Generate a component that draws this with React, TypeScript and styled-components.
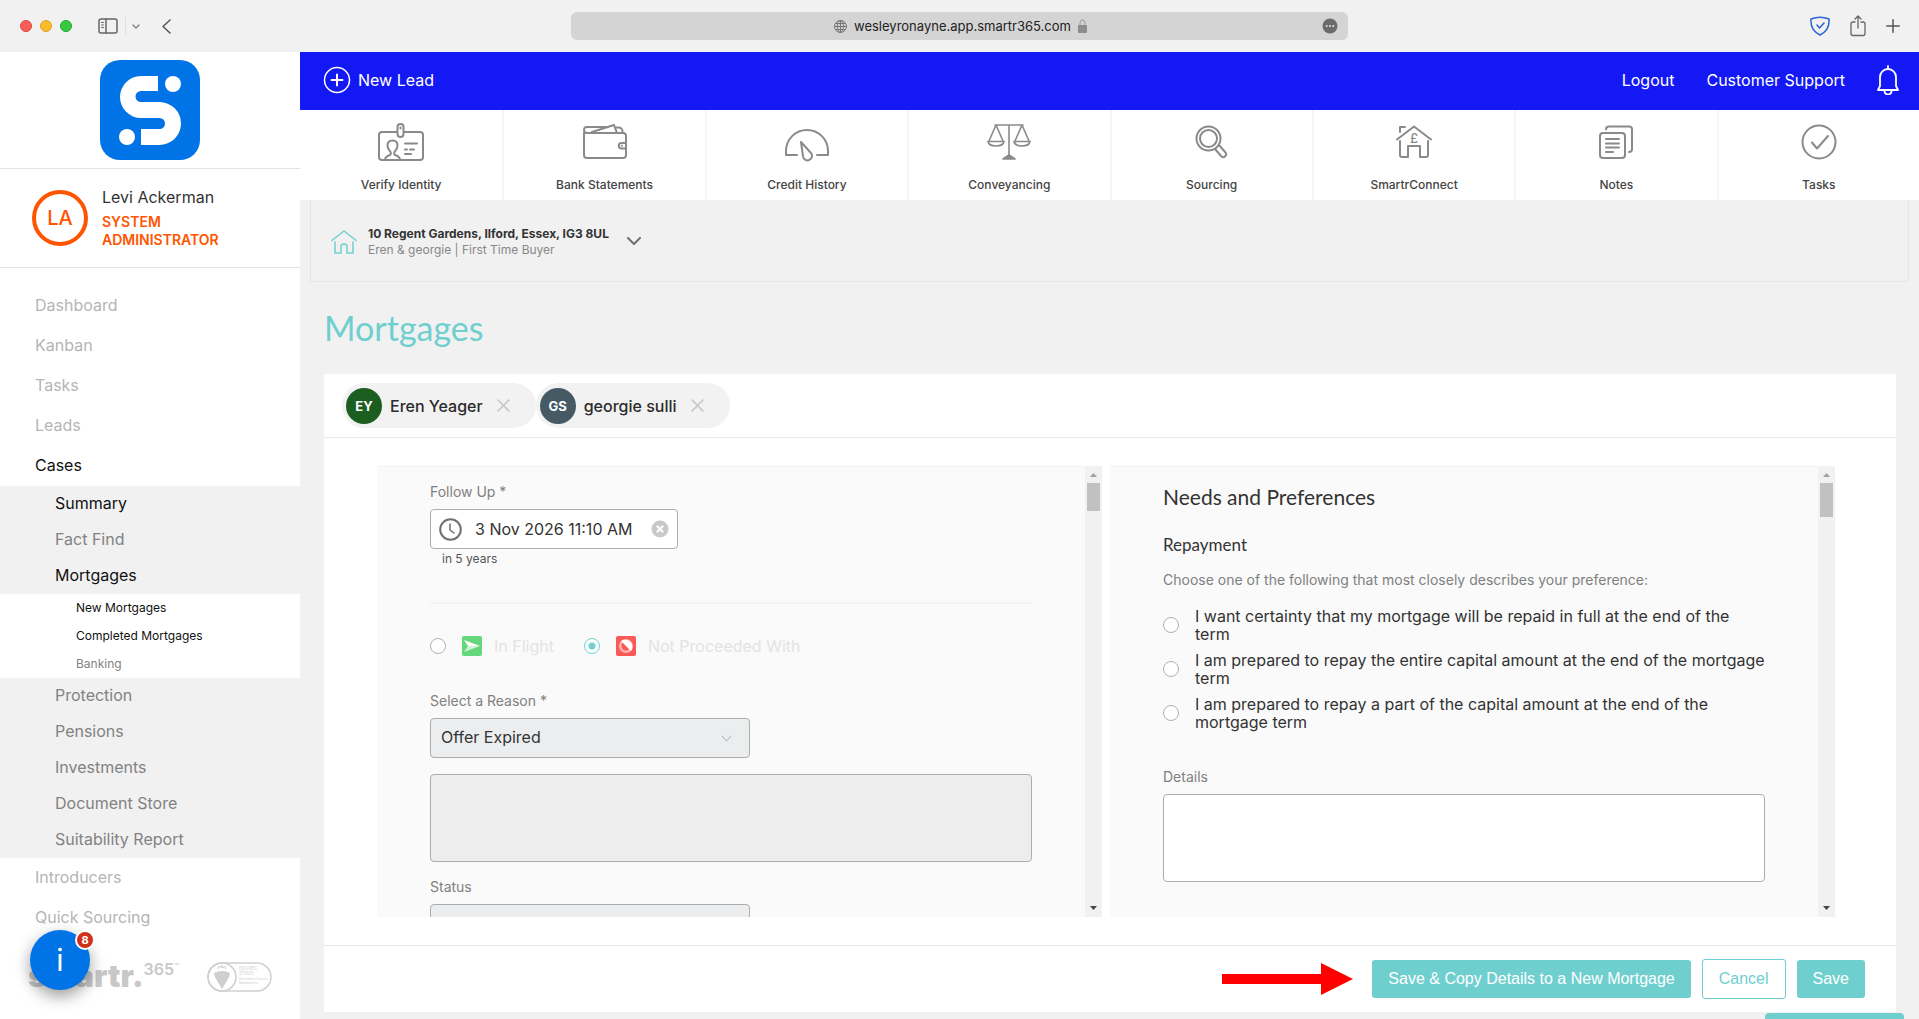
import React from "react";
import styled, { createGlobalStyle } from "styled-components";

const teal = "#6fcfcf";
const blue = "#0073e6";
const orange = "#ff5500";
const grey = "#f1f1f1";
const body = `Inter, "Liberation Sans", Arial, sans-serif`;
const display = `Lato, "Open Sans", sans-serif`;

const Global = createGlobalStyle`
  *, *::before, *::after { box-sizing: border-box; }
  body { margin: 0; background: ${grey}; color: #333; font-family: ${body}; font-size: 16px; overflow: hidden; }
  button, input, select, textarea { font: inherit; color: inherit; margin: 0; }
  button { border: 0; padding: 0; background: none; cursor: pointer; }
  a { color: inherit; text-decoration: none; }
  h1, h2, h3, p, ul, fieldset { margin: 0; padding: 0; border: 0; list-style: none; font-weight: 400; }
  svg { display: block; flex: none; }
`;

const Page = styled.div`
  display: flex;
  flex-direction: column;
  height: 100vh;
  overflow: hidden;
`;

/* Browser bar */
const BrowserBar = styled.header`
  display: grid;
  grid-template-columns: 1fr minmax(300px, 777px) 1fr;
  align-items: center;
  flex: none;
  height: 52px;
  background: ${grey};
`;
const BarLeft = styled.div`
  display: flex;
  align-items: center;
  padding-left: 20px;
`;
const Lights = styled.div`
  display: flex;
  gap: 8px;
  margin-right: 26px;
`;
const Light = styled.span<{ $fill: string; $edge: string }>`
  width: 12px;
  height: 12px;
  border-radius: 50%;
  background: ${(p) => p.$fill};
  border: 1px solid ${(p) => p.$edge};
`;
const BarRule = styled.span`
  width: 1px;
  height: 18px;
  margin: 0 6px 0 7px;
  background: #e0e0e0;
`;
const BackButton = styled.button`
  margin-left: 22px;
`;
const Address = styled.div`
  display: flex;
  align-items: center;
  height: 28px;
  padding: 0 10px;
  border-radius: 6px;
  background: #d4d4d4;
`;
const AddressText = styled.div`
  flex: 1;
  display: flex;
  align-items: center;
  justify-content: center;
  gap: 7px;
  padding-left: 18px;
  font-size: 13px;
  color: #222;
`;
const BarRight = styled.div`
  display: flex;
  align-items: center;
  justify-content: flex-end;
  gap: 20px;
  padding-right: 19px;
`;

const Shell = styled.div`
  display: flex;
  flex: 1;
  min-height: 0;
`;

/* Sidebar */
const Sidebar = styled.aside`
  position: relative;
  display: flex;
  flex-direction: column;
  flex: none;
  width: 300px;
  background: #fff;
`;
const Brand = styled.div`
  display: flex;
  justify-content: center;
  padding: 8px 0;
  border-bottom: 1px solid #e2e2e2;
`;
const User = styled.div`
  display: flex;
  align-items: center;
  gap: 14px;
  height: 99px;
  padding: 0 32px;
  border-bottom: 1px solid #e2e2e2;
`;
const Initials = styled.span`
  display: flex;
  align-items: center;
  justify-content: center;
  flex: none;
  width: 56px;
  height: 56px;
  border: 4px solid ${orange};
  border-radius: 50%;
  color: ${orange};
  font-size: 20px;
  font-weight: 500;
`;
const UserName = styled.p`
  font-size: 16px;
  line-height: 20px;
  margin-bottom: 6px;
`;
const UserRole = styled.p`
  width: 140px;
  font-size: 14px;
  font-weight: 600;
  line-height: 18px;
  color: ${orange};
`;
const Nav = styled.nav`
  padding-top: 18px;
`;
const navTone = { light: "#b5b5b5", mid: "#828282", dark: "#111" };
type Tone = keyof typeof navTone;
const NavLink = styled.a<{ $tone: Tone; $level: 1 | 2 | 3 }>`
  display: flex;
  align-items: center;
  height: ${(p) => [40, 36, 28][p.$level - 1]}px;
  padding-bottom: 2px;
  padding-left: ${(p) => [35, 55, 76][p.$level - 1]}px;
  font-size: ${(p) => (p.$level === 3 ? 12 : 16)}px;
  color: ${(p) => navTone[p.$tone]};
`;
const SubNav = styled.div<{ $bg: string }>`
  background: ${(p) => p.$bg};
`;
const SideFoot = styled.div`
  display: flex;
  align-items: flex-start;
  justify-content: space-between;
  padding: 24px 28px 0;
  color: #c8c8c8;
`;
const Wordmark = styled.div`
  display: flex;
  align-items: flex-start;
  font-size: 31px;
  font-weight: 900;
  line-height: 28px;
`;
const WordmarkSup = styled.span`
  font-size: 16px;
  font-weight: 600;
  line-height: 14px;
`;
const WordmarkTm = styled.span`
  font-size: 8px;
  font-weight: 400;
  line-height: 8px;
`;
const Helper = styled.button`
  position: absolute;
  left: 30px;
  bottom: 29px;
  width: 60px;
  height: 60px;
  border-radius: 50%;
  background: ${blue};
  color: #fff;
  font-size: 30px;
  box-shadow: 0 6px 16px rgba(0, 0, 0, 0.4);
`;
const HelperCount = styled.span`
  position: absolute;
  top: 0;
  right: -5px;
  width: 20px;
  height: 20px;
  border: 2px solid #fff;
  border-radius: 50%;
  background: #d0311b;
  font-size: 11px;
  font-weight: 700;
  line-height: 16px;
`;

/* Main column */
const Main = styled.main`
  position: relative;
  display: flex;
  flex-direction: column;
  flex: 1;
  min-width: 0;
`;
const TopBar = styled.div`
  display: flex;
  align-items: center;
  justify-content: space-between;
  flex: none;
  height: 58px;
  padding: 0 20px 2px 23px;
  background: #1418f5;
  color: #fff;
`;
const TopGroup = styled.div`
  display: flex;
  align-items: center;
  gap: 32px;
`;
const TopButton = styled.button`
  display: flex;
  align-items: center;
  gap: 7px;
`;
const Tools = styled.div`
  display: grid;
  grid-template-columns: repeat(8, 1fr);
  flex: none;
  background: #fff;
`;
const Tool = styled.button`
  display: flex;
  flex-direction: column;
  align-items: center;
  gap: 15px;
  padding: 12px 0 7px;
  font-size: 12px;
  font-weight: 500;
  line-height: 16px;
  color: #444;
  border-left: 2px solid #f5f5f5;
  &:first-child { border-left: 0; }
`;
const ToolIcon = styled.span`
  display: flex;
  align-items: center;
  height: 40px;
`;
const CaseBar = styled.div`
  display: flex;
  align-items: center;
  gap: 18px;
  flex: none;
  height: 82px;
  margin: 0 10px;
  padding: 2px 20px 0;
  border: 1px solid #e6e6e6;
  border-top: 0;
`;
const CaseInfo = styled.div`
  display: flex;
  align-items: center;
  gap: 11px;
`;
const CaseTitle = styled.p`
  font-size: 12px;
  font-weight: 700;
  line-height: 16px;
  color: #333;
`;
const CaseSub = styled.p`
  font-size: 12px;
  line-height: 16px;
  color: #888;
`;
const PageTitle = styled.h1`
  flex: none;
  padding: 26px 24px 26px;
  font-family: ${display};
  font-size: 34px;
  line-height: 40px;
  color: ${teal};
`;
const Card = styled.section`
  flex: none;
  margin: 0 23px 0 24px;
  background: #fff;
`;
const Chips = styled.ul`
  display: flex;
  padding: 9px 18px;
  border-bottom: 1px solid #e8e8e8;
`;
const Chip = styled.li`
  display: flex;
  align-items: center;
  gap: 8px;
  height: 45px;
  padding: 0 26px 0 4px;
  border-radius: 23px;
  background: #f2f2f2;
  font-size: 16px;
  font-weight: 500;
  color: #2b2b2b;
`;
const ChipAvatar = styled.span<{ $bg: string }>`
  display: flex;
  align-items: center;
  justify-content: center;
  width: 36px;
  height: 36px;
  border-radius: 50%;
  background: ${(p) => p.$bg};
  color: #fff;
  font-size: 13px;
  font-weight: 700;
`;
const ChipClose = styled.button`
  margin-left: 6px;
`;
const Panels = styled.div`
  display: grid;
  grid-template-columns: 1fr 1fr;
  gap: 8px;
  padding: 28px 61px 28px 53px;
`;
const Panel = styled.div`
  display: flex;
  min-width: 0;
  height: calc(100vh - 568px);
  background: #fafafa;
  border-top: 1px solid #f1f1f1;
`;
const PanelBody = styled.div`
  flex: 1;
  min-width: 0;
  overflow: hidden;
  padding: 16px 53px 0;
`;
const Scrollbar = styled.div`
  display: flex;
  flex-direction: column;
  align-items: center;
  flex: none;
  width: 17px;
  padding: 6px 0 7px;
  background: ${grey};
`;
const Thumb = styled.span<{ $size: number }>`
  width: 13px;
  height: ${(p) => p.$size}px;
  margin: 6px 0 auto;
  background: #c1c1c1;
`;
const Label = styled.label`
  display: block;
  margin-bottom: 8px;
  font-size: 14px;
  line-height: 18px;
  color: #808080;
`;
const DateField = styled.div`
  display: flex;
  align-items: center;
  width: 248px;
  height: 40px;
  padding: 0 8px;
  border: 1px solid #adadad;
  border-radius: 4px;
  background: #fff;
`;
const DateInput = styled.input`
  flex: 1;
  min-width: 0;
  padding: 0 0 0 13px;
  border: 0;
  outline: 0;
  background: none;
`;
const Hint = styled.p`
  padding: 2px 12px 35px;
  font-size: 12px;
  line-height: 16px;
  color: #555;
  border-bottom: 2px solid #f3f3f3;
`;
const StatusRow = styled.fieldset`
  display: flex;
  gap: 30px;
  margin: 30px 0 34px;
`;
const StatusOption = styled.label`
  display: flex;
  align-items: center;
  gap: 12px;
  height: 24px;
  color: #e3e3e3;
`;
const Radio = styled.input`
  appearance: none;
  flex: none;
  width: 16px;
  height: 16px;
  margin: 0;
  border: 1px solid #b0b0b0;
  border-radius: 50%;
  background: #fff;
  &:checked {
    border-color: ${teal};
    background: radial-gradient(circle, ${teal} 3px, #fff 4px);
  }
`;
const StatusIcon = styled.span<{ $bg: string }>`
  display: flex;
  align-items: center;
  justify-content: center;
  width: 20px;
  height: 20px;
  margin-left: 4px;
  border-radius: 2px;
  background: ${(p) => p.$bg};
`;
const SelectWrap = styled.div`
  display: grid;
  align-items: center;
  width: 320px;
  margin-bottom: 16px;
  > * { grid-area: 1 / 1; }
  > svg { justify-self: end; margin-right: 18px; pointer-events: none; }
`;
const Select = styled.select`
  appearance: none;
  width: 100%;
  height: 40px;
  padding: 0 40px 2px 10px;
  border: 1px solid #adadad;
  border-radius: 4px;
  background: #ecedef;
  color: #333;
  opacity: 1;
`;
const TextArea = styled.textarea`
  display: block;
  width: 100%;
  height: 88px;
  margin-bottom: 16px;
  border: 1px solid #adadad;
  border-radius: 4px;
  resize: none;
  background: #fff;
  &:disabled { background: #ededed; }
`;
const SectionTitle = styled.h2`
  margin-bottom: 24px;
  font-family: ${display};
  font-size: 21px;
  line-height: 28px;
`;
const SubTitle = styled.h3`
  margin-bottom: 16px;
  font-family: ${display};
  font-size: 17px;
  line-height: 20px;
`;
const Lead = styled.p`
  margin-bottom: 18px;
  font-size: 14px;
  line-height: 18px;
  color: #808080;
`;
const Options = styled.fieldset`
  display: flex;
  flex-direction: column;
  gap: 8px;
  margin-bottom: 37px;
`;
const Option = styled.label`
  display: flex;
  align-items: center;
  gap: 16px;
  line-height: 18px;
`;
const CardFoot = styled.footer`
  display: flex;
  align-items: center;
  justify-content: flex-end;
  gap: 11px;
  height: 67px;
  padding-right: 31px;
  border-top: 1px solid #e8e8e8;
`;
const Arrow = styled.span`
  margin-right: 8px;
`;
const Action = styled.button<{ $outline?: boolean }>`
  height: ${(p) => (p.$outline ? 40 : 38)}px;
  padding: 0 16px;
  border-radius: 3px;
  border: ${(p) => (p.$outline ? `1px solid ${teal}` : "0")};
  background: ${(p) => (p.$outline ? "#fff" : teal)};
  color: ${(p) => (p.$outline ? teal : "#fff")};
  font-family: "Liberation Sans", Arial, sans-serif;
  font-size: 16px;
`;
const Dock = styled.div`
  position: absolute;
  right: 15px;
  bottom: 0;
  width: 139px;
  height: 6px;
  border-radius: 4px 4px 0 0;
  background: ${teal};
`;

/* Drawings */
const Line = ({ w, h, sw = 2, color = "#8a8a8a", children }: { w: number; h: number; sw?: number; color?: string; children: React.ReactNode }) => (
  <svg width={w} height={h} viewBox={`0 0 ${w} ${h}`} fill="none" stroke={color} strokeWidth={sw} strokeLinecap="round" strokeLinejoin="round" aria-hidden="true">
    {children}
  </svg>
);

const Logo = () => (
  <svg width="100" height="100" viewBox="0 0 100 100" role="img" aria-label="smartr365">
    <rect width="100" height="100" rx="20" fill={blue} />
    <g fill="#fff">
      <path d="M58 16H41A21 21 0 0 0 41 58H59.5A5.5 5.5 0 0 1 59.5 69H41V85H59.5A21.5 21.5 0 0 0 59.5 42H41A5.5 5.5 0 0 1 41 31H58Z" />
      <circle cx="73" cy="24" r="8" />
      <circle cx="27" cy="77" r="8" />
    </g>
  </svg>
);

const tools: [string, React.ReactNode][] = [
  ["Verify Identity", (
    <Line w={46} h={38}>
      <path d="M19 9H4a3 3 0 0 0-3 3v22a3 3 0 0 0 3 3h38a3 3 0 0 0 3-3V12a3 3 0 0 0-3-3H26" />
      <rect x="19.5" y="1" width="6" height="13" rx="3" />
      <path d="M22.5 4.5v1" />
      <path d="M7 37c0-3 2-4 5-5 1-.5 1-2 .5-3-2-2-3-4-3-6.500C9.500 19 11.500 17.500 14.500 17.500s5 1.500 5 5c0 2.500-1 4.500-3 6.500-.5 1-.5 2.500.5 3 3 1 5 2 5 5M27 20.500h12M27 26.500h2M32 26.500h4M27 31h6" />
    </Line>
  )],
  ["Bank Statements", (
    <Line w={44} h={36}>
      <path d="M1 9v22a3 3 0 0 0 3 3h36a3 3 0 0 0 3-3V12a3 3 0 0 0-3-3H4a3 3 0 0 1-3-3 3 3 0 0 1 3-3h20" />
      <path d="M9 8l22-7 3 8M33.500 3.500h2a4 4 0 0 1 4 4V9M43 19h-4.500a2.500 2.500 0 0 0 0 5.500H43" />
      <path d="M39 21.700v.1" />
    </Line>
  )],
  ["Credit History", (
    <Line w={44} h={40}>
      <path d="M12 33H1v-4a21 21 0 0 1 42 0v4H32" />
      <path d="M16 20l9.500 10.500a4.500 4.500 0 1 1-7.500 3.500Z" />
    </Line>
  )],
  ["Conveyancing", (
    <Line w={44} h={36} sw={1.6}>
      <path d="M8 1h28M22 1v31M9 1L2 17M9 1l7 16M35 1l-7 16M35 1l7 16M1 17.500h16c-1 6-15 6-16 0ZM27 17.500h16c-1 6-15 6-16 0Z" />
      <path d="M16 35l6-4 6 4Z" fill="#8a8a8a" />
    </Line>
  )],
  ["Sourcing", (
    <Line w={34} h={34}>
      <circle cx="13.500" cy="13.500" r="12" />
      <circle cx="13.500" cy="13.500" r="8.500" />
      <path d="M20 24l6.500 7.500c2.500 2 6-1.500 4-4L24 20" />
    </Line>
  )],
  ["SmartrConnect", (
    <Line w={36} h={34}>
      <path d="M1 14.500L18 1.500l17 13M4 7V2h5M4 16v14a2 2 0 0 0 2 2h6V21h12v11h6a2 2 0 0 0 2-2V16" />
      <text x="18" y="18" textAnchor="middle" fontSize="13" fontFamily="Inter, sans-serif" fill="#8a8a8a" stroke="none">£</text>
    </Line>
  )],
  ["Notes", (
    <Line w={34} h={34}>
      <rect x="1" y="8" width="25" height="25" rx="3" />
      <path d="M7 4.500a3 3 0 0 1 3-3h20a3 3 0 0 1 3 3V24a3 3 0 0 1-3 3M7 14h13M7 18.500h13M7 22.500h13M7 27h7" />
    </Line>
  )],
  ["Tasks", (
    <Line w={36} h={36}>
      <circle cx="18" cy="18" r="16.500" />
      <path d="M11 18.500l5 6L27 12" />
    </Line>
  )],
];

const Globe = () => (
  <Line w={13} h={13} sw={1} color="#777">
    <circle cx="6.500" cy="6.500" r="6" />
    <ellipse cx="6.500" cy="6.500" rx="3" ry="6" />
    <path d="M.5 6.500h12M6.500.5v12M1.500 3.500h10M1.500 9.500h10" />
  </Line>
);

const IsoBadge = () => (
  <svg width="65" height="30" viewBox="0 0 65 30" fill="none" stroke="#cfcfcf" role="img" aria-label="ISO/IEC 27001">
    <rect x="1" y="1" width="63" height="28" rx="14" strokeWidth="1.500" />
    <circle cx="15" cy="15" r="14" strokeWidth="1.500" />
    <path d="M7 11q8-4 16 0q0 3-2 6l-6 10-6-10q-2-3-2-6Z" fill="#cfcfcf" stroke="none" />
    <path d="M11 7l1-3 2 2 1-3 1 3 2-2 1 3" strokeWidth="1" />
    <g fill="#d5d5d5" stroke="none" fontFamily="Inter, sans-serif" fontWeight="500">
      <text x="32" y="8" fontSize="5">ISO/IEC</text>
      <text x="32" y="13" fontSize="5">27001</text>
      <text x="32" y="17.500" fontSize="3">Information Security</text>
      <text x="32" y="21.500" fontSize="3">Management</text>
    </g>
  </svg>
);

const Cross = () => (
  <Line w={13} h={13} sw={1.5} color="#c4c4c4"><path d="M1 1l11 11M12 1L1 12" /></Line>
);

const ScrollTrack = ({ size }: { size: number }) => (
  <Scrollbar aria-hidden="true">
    <svg width="7" height="4" viewBox="0 0 7 4"><path d="M0 4L3.500 0 7 4Z" fill="#a0a0a0" /></svg>
    <Thumb $size={size} />
    <svg width="7" height="4" viewBox="0 0 7 4"><path d="M0 0h7L3.500 4Z" fill="#444" /></svg>
  </Scrollbar>
);

const SelectBox = ({ id, value }: { id: string; value: string }) => (
  <SelectWrap>
    <Select id={id} disabled defaultValue={value}><option>{value}</option></Select>
    <Line w={11} h={7} sw={1} color="#aaa"><path d="M1 1l4.500 5L10 1" /></Line>
  </SelectWrap>
);

const topNav: [string, Tone][] = [["Dashboard", "light"], ["Kanban", "light"], ["Tasks", "light"], ["Leads", "light"], ["Cases", "dark"]];
const caseNav: [string, Tone][] = [["Summary", "dark"], ["Fact Find", "mid"], ["Mortgages", "dark"]];
const mortgageNav: [string, Tone][] = [["New Mortgages", "dark"], ["Completed Mortgages", "dark"], ["Banking", "mid"]];
const caseNavRest: [string, Tone][] = [["Protection", "mid"], ["Pensions", "mid"], ["Investments", "mid"], ["Document Store", "mid"], ["Suitability Report", "mid"]];
const lastNav: [string, Tone][] = [["Introducers", "light"], ["Quick Sourcing", "light"]];

const links = (items: [string, Tone][], level: 1 | 2 | 3) =>
  items.map(([text, tone]) => <NavLink key={text} href="#" $tone={tone} $level={level}>{text}</NavLink>);

const people = [
  { initials: "EY", name: "Eren Yeager", bg: "#1b5e20" },
  { initials: "GS", name: "georgie sulli", bg: "#455a64" },
];
const preferences = [
  "I want certainty that my mortgage will be repaid in full at the end of the term",
  "I am prepared to repay the entire capital amount at the end of the mortgage term",
  "I am prepared to repay a part of the capital amount at the end of the mortgage term",
];

export default function App() {
  return (
    <Page>
      <Global />
      <BrowserBar>
        <BarLeft>
          <Lights>
            <Light $fill="#f95f56" $edge="#e0443e" />
            <Light $fill="#fabc2e" $edge="#dea123" />
            <Light $fill="#3ac840" $edge="#1aab29" />
          </Lights>
          <button aria-label="Show sidebar">
            <Line w={20} h={16} sw={1.5} color="#666">
              <rect x="1" y="1" width="18" height="14" rx="2" />
              <path d="M8 1v14" /><path d="M3.500 4.500h2M3.500 7h2M3.500 9.500h2" strokeWidth="1" />
            </Line>
          </button>
          <BarRule />
          <button aria-label="Tab groups"><Line w={8} h={5} sw={1.5} color="#888"><path d="M1 1l3 3 3-3" /></Line></button>
          <BackButton aria-label="Back"><Line w={9} h={15} sw={1.5} color="#555"><path d="M8 1L1 7.500 8 14" /></Line></BackButton>
        </BarLeft>
        <Address>
          <AddressText>
            <Globe />
            wesleyronayne.app.smartr365.com
            <svg width="9" height="14" viewBox="0 0 9 14" fill="none" aria-hidden="true">
              <path d="M2 6V4a2.500 3 0 0 1 5 0v2" stroke="#999" />
              <rect y="6" width="9" height="8" rx="1" fill="#8c8c8c" />
            </svg>
          </AddressText>
          <button aria-label="Page settings">
            <svg width="16" height="16" viewBox="0 0 16 16" aria-hidden="true">
              <circle cx="8" cy="8" r="7.500" fill="#6b6b6b" />
              <g fill="#ddd"><circle cx="4.700" cy="8" r="1.100" /><circle cx="8" cy="8" r="1.100" /><circle cx="11.300" cy="8" r="1.100" /></g>
            </svg>
          </button>
        </Address>
        <BarRight>
          <button aria-label="Privacy report">
            <Line w={20} h={20} sw={1.5} color="#2a63d6">
              <path d="M1 3Q10-.5 19 3q1 11-9 16Q0 14 1 3Z" /><path d="M7 9l2.500 3 4.500-5" />
            </Line>
          </button>
          <button aria-label="Share">
            <Line w={16} h={22} sw={1.300} color="#666">
              <path d="M5 7H3a2 2 0 0 0-2 2v9.500a2 2 0 0 0 2 2h10a2 2 0 0 0 2-2V9a2 2 0 0 0-2-2h-2M8 13V1M5 4l3-3 3 3" />
            </Line>
          </button>
          <button aria-label="New tab"><Line w={14} h={14} sw={1.500} color="#555"><path d="M7 .8v12.400M.8 7h12.400" /></Line></button>
        </BarRight>
      </BrowserBar>

      <Shell>
        <Sidebar>
          <Brand><Logo /></Brand>
          <User>
            <Initials>LA</Initials>
            <div>
              <UserName>Levi Ackerman</UserName>
              <UserRole>SYSTEM ADMINISTRATOR</UserRole>
            </div>
          </User>
          <Nav>
            {links(topNav, 1)}
            <SubNav $bg={grey}>
              {links(caseNav, 2)}
              <SubNav $bg="#fff">{links(mortgageNav, 3)}</SubNav>
              {links(caseNavRest, 2)}
            </SubNav>
            {links(lastNav, 1)}
          </Nav>
          <SideFoot>
            <Wordmark>smartr.<WordmarkSup>365</WordmarkSup><WordmarkTm>™</WordmarkTm></Wordmark>
            <IsoBadge />
          </SideFoot>
          <Helper aria-label="Help, 8 new">i<HelperCount>8</HelperCount></Helper>
        </Sidebar>

        <Main>
          <TopBar>
            <TopButton>
              <Line w={28} h={28} sw={1.500} color="#fff"><circle cx="14" cy="14" r="12.500" /><path d="M14 8.500v11M8.500 14h11" strokeWidth="2" /></Line>
              New Lead
            </TopButton>
            <TopGroup>
              <a href="#">Logout</a>
              <a href="#">Customer Support</a>
              <button aria-label="Notifications">
                <Line w={22} h={30} sw={1.800} color="#fff">
                  <path d="M11 1v3M3 21V12a8 8 0 0 1 16 0v9l2 4H1l2-4M7.500 25.500a3.500 3.500 0 0 0 7 1" />
                </Line>
              </button>
            </TopGroup>
          </TopBar>
          <Tools>
            {tools.map(([name, icon]) => <Tool key={name}><ToolIcon>{icon}</ToolIcon>{name}</Tool>)}
          </Tools>
          <CaseBar>
            <CaseInfo>
              <Line w={26} h={26} sw={1.500} color={teal}>
                <path d="M1 11.500L13 2l12 9.500M4 13v11h6v-6a3 3 0 0 1 6 0v6h6V13" />
              </Line>
              <div>
                <CaseTitle>10 Regent Gardens, Ilford, Essex, IG3 8UL</CaseTitle>
                <CaseSub>Eren &amp; georgie | First Time Buyer</CaseSub>
              </div>
            </CaseInfo>
            <button aria-label="Change case"><Line w={14} h={9} color="#707070"><path d="M1 1l6 6 6-6" /></Line></button>
          </CaseBar>
          <PageTitle>Mortgages</PageTitle>
          <Card>
            <Chips>
              {people.map((p) => (
                <Chip key={p.name}>
                  <ChipAvatar $bg={p.bg}>{p.initials}</ChipAvatar>
                  {p.name}
                  <ChipClose aria-label={`Remove ${p.name}`}><Cross /></ChipClose>
                </Chip>
              ))}
            </Chips>
            <Panels>
              <Panel>
                <PanelBody>
                  <Label htmlFor="follow">Follow Up *</Label>
                  <DateField>
                    <Line w={23} h={23} color="#707070"><circle cx="11.500" cy="11.500" r="10.300" /><path d="M11 6v6l4 3" strokeWidth="1.500" /></Line>
                    <DateInput id="follow" defaultValue="3 Nov 2026 11:10 AM" />
                    <button aria-label="Clear date">
                      <svg width="18" height="18" viewBox="0 0 18 18"><circle cx="9" cy="9" r="8.500" fill="#c8c8c8" /><path d="M5.800 5.800l6.400 6.400M12.200 5.800l-6.400 6.400" stroke="#fff" strokeWidth="2" /></svg>
                    </button>
                  </DateField>
                  <Hint>in 5 years</Hint>
                  <StatusRow disabled>
                    <StatusOption>
                      <Radio type="radio" name="progress" />
                      <StatusIcon $bg="#66d67a">
                        <svg width="16" height="12" viewBox="0 0 16 12"><path d="M0 0L16 6H4Z" fill="#fff" /><path d="M16 6L0 12 4 6Z" fill="#cdf2d3" /></svg>
                      </StatusIcon>
                      In Flight
                    </StatusOption>
                    <StatusOption>
                      <Radio type="radio" name="progress" defaultChecked />
                      <StatusIcon $bg="#fb5858">
                        <svg width="14" height="14" viewBox="0 0 14 14"><circle cx="7" cy="7" r="5.800" fill="none" stroke="#fdb5b5" strokeWidth="2.400" /><path d="M2.100 2.100A7 7 0 0 1 11.900 11.900Z" fill="#fff" /></svg>
                      </StatusIcon>
                      Not Proceeded With
                    </StatusOption>
                  </StatusRow>
                  <Label htmlFor="reason">Select a Reason *</Label>
                  <SelectBox id="reason" value="Offer Expired" />
                  <TextArea disabled aria-label="Reason notes" />
                  <Label htmlFor="status">Status</Label>
                  <SelectBox id="status" value="Cancelled" />
                </PanelBody>
                <ScrollTrack size={28} />
              </Panel>
              <Panel>
                <PanelBody>
                  <SectionTitle>Needs and Preferences</SectionTitle>
                  <SubTitle>Repayment</SubTitle>
                  <Lead>Choose one of the following that most closely describes your preference:</Lead>
                  <Options>
                    {preferences.map((text) => (
                      <Option key={text}><Radio type="radio" name="repayment" /><span>{text}</span></Option>
                    ))}
                  </Options>
                  <Label htmlFor="details">Details</Label>
                  <TextArea id="details" />
                </PanelBody>
                <ScrollTrack size={34} />
              </Panel>
            </Panels>
            <CardFoot>
              <Arrow>
                <svg width="131" height="32" viewBox="0 0 131 32" aria-hidden="true"><path d="M0 11h99V0l32 16-32 16V21H0Z" fill="#f00" /></svg>
              </Arrow>
              <Action>Save &amp; Copy Details to a New Mortgage</Action>
              <Action $outline>Cancel</Action>
              <Action>Save</Action>
            </CardFoot>
          </Card>
          <Dock />
        </Main>
      </Shell>
    </Page>
  );
}
